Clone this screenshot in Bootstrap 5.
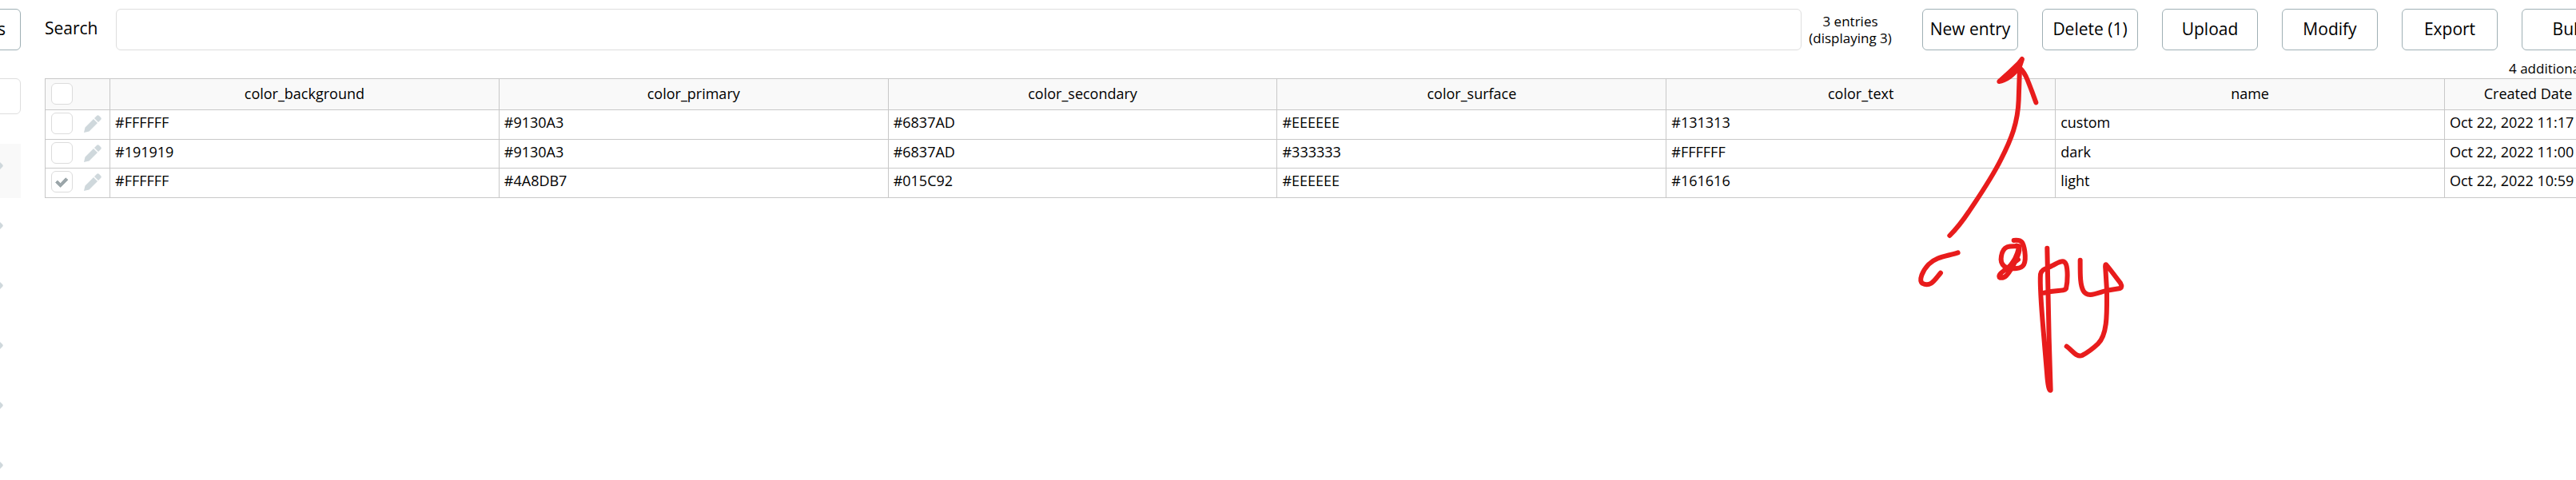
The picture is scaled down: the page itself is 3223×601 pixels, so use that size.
<!DOCTYPE html>
<html lang="en">
<head>
<meta charset="utf-8">
<meta name="viewport" content="width=device-width, initial-scale=1">
<title>App data</title>
<link href="https://cdn.jsdelivr.net/npm/bootstrap@5.3.0/dist/css/bootstrap.min.css" rel="stylesheet">
<style>
  body { font-family: "Open Sans", "Noto Sans", sans-serif; font-size: 18px; line-height: 24px; color: #000; background: #fff; }
  .app-shell { min-height: 100vh; padding-top: 11px; }
  .side-panel { width: 26px; }
  .side-panel > * { width: 240px; }
  .tool-btn { --bs-btn-color: #000; --bs-btn-border-color: #9fb0b5; --bs-btn-bg: #fff; --bs-btn-border-radius: 6px;
    --bs-btn-font-size: 21px; --bs-btn-padding-x: 0; --bs-btn-padding-y: 0; height: 52px; white-space: nowrap; }
  .main-panel { min-width: 0; margin-left: 30px; }
  .main-panel .tool-btn { width: 120px; }
  .side-btn { --bs-btn-padding-x: 18px; }
  .field-box { border: 1px solid #dedede; border-radius: 6px; height: 52px; }
  .side-field { height: 45px; margin-top: 35px; }
  .type-list { margin-top: 37px; gap: 7px; }
  .type-item { height: 68px; padding-right: 22px; }
  .type-item.current { background: #f9f9f9; }
  .search-label { font-size: 21px; width: 89px; padding-bottom: 4px; }
  .tool-row { margin-right: -7px; }
  .entry-count { width: 151px; padding-right: 29px; font-size: 17px; line-height: 21px; }
  .button-row { gap: 30px; }
  .extra-note { height: 35px; width: 84px; margin-right: 45px; padding-top: 12px; font-size: 17px; line-height: 22px; white-space: nowrap; }
  .data-wrap { margin-right: -45px; }
  .data-grid { table-layout: fixed; border-collapse: collapse; width: 100%; }
  .data-grid th, .data-grid td { border: 1px solid #c8c8c8; padding: 0 6px; font-weight: 400; white-space: nowrap; }
  .data-grid th { background: #f9f9f9; text-align: center; height: 39px; padding-bottom: 2px; }
  .data-grid td { vertical-align: top; height: 37px; padding-top: 3px; }
  .data-grid tr:nth-child(even) td { height: 36px; }
  .data-grid .pick-col { width: 81px; padding-left: 7px; padding-right: 6px; }
  .data-grid .date-col { width: 209px; }
  .pick-box.form-check-input { width: 27px; height: 27px; margin: 0; border: 1px solid #dcdcdc; border-radius: 6px; background-color: #fff; }
  .pick-box.form-check-input:checked { background-color: #fff; border-color: #dcdcdc;
    background-size: 100% 100%;
    background-image: url("data:image/svg+xml,%3csvg xmlns='http://www.w3.org/2000/svg' viewBox='0 0 27 27'%3e%3cpath d='M5 14.500 7.500 12l4 4 7-7.500 3 2.500L11.500 21z' fill='%239ba5a9' stroke='%239ba5a9' stroke-linejoin='round'/%3e%3c/svg%3e"); }
  .edit-link { color: #cfd8dc; line-height: 0; }
  .ink-note { right: 523px; top: 60px; width: 340px; height: 450px; pointer-events: none; }
</style>
</head>
<body>
<svg class="d-none">
  <symbol id="pencil" viewBox="0 0 22 22">
    <path fill="currentColor" d="M0 22 1.500 15.500 12 5 17 10 6.500 20.500ZM13 4 16 1Q17.500-.5 19 1L21 3Q22.500 4.500 21 6L18 9Z"/>
  </symbol>
</svg>
<div class="app-shell d-flex position-relative overflow-hidden">
  <aside class="side-panel d-flex flex-column align-items-end flex-shrink-0">
    <button type="button" class="btn tool-btn side-btn text-end flex-shrink-0">s</button>
    <input type="text" class="field-box side-field flex-shrink-0" aria-label="Search types">
    <nav class="type-list d-flex flex-column" aria-label="Types">
      <div class="type-item current d-flex align-items-center justify-content-end"><a href="#" class="edit-link" aria-label="Edit"><svg width="22" height="22"><use href="#pencil"/></svg></a></div>
      <div class="type-item d-flex align-items-center justify-content-end"><a href="#" class="edit-link" aria-label="Edit"><svg width="22" height="22"><use href="#pencil"/></svg></a></div>
      <div class="type-item d-flex align-items-center justify-content-end"><a href="#" class="edit-link" aria-label="Edit"><svg width="22" height="22"><use href="#pencil"/></svg></a></div>
      <div class="type-item d-flex align-items-center justify-content-end"><a href="#" class="edit-link" aria-label="Edit"><svg width="22" height="22"><use href="#pencil"/></svg></a></div>
      <div class="type-item d-flex align-items-center justify-content-end"><a href="#" class="edit-link" aria-label="Edit"><svg width="22" height="22"><use href="#pencil"/></svg></a></div>
      <div class="type-item d-flex align-items-center justify-content-end"><a href="#" class="edit-link" aria-label="Edit"><svg width="22" height="22"><use href="#pencil"/></svg></a></div>
    </nav>
  </aside>
  <main class="main-panel flex-grow-1">
    <div class="data-wrap">
      <div class="tool-row d-flex align-items-center">
        <label for="search" class="search-label flex-shrink-0">Search</label>
        <input id="search" type="text" class="field-box flex-grow-1">
        <div class="entry-count text-center flex-shrink-0">3 entries<br>(displaying 3)</div>
        <div class="button-row d-flex flex-shrink-0">
          <button type="button" class="btn tool-btn">New entry</button>
          <button type="button" class="btn tool-btn">Delete (1)</button>
          <button type="button" class="btn tool-btn">Upload</button>
          <button type="button" class="btn tool-btn">Modify</button>
          <button type="button" class="btn tool-btn">Export</button>
          <button type="button" class="btn tool-btn">Bulk</button>
        </div>
      </div>
      <div class="extra-note ms-auto">4 additional</div>
      <table class="data-grid">
        <thead>
          <tr>
            <th class="pick-col text-start"><input type="checkbox" class="form-check-input pick-box d-block" aria-label="Select all"></th>
            <th>color_background</th><th>color_primary</th><th>color_secondary</th><th>color_surface</th><th>color_text</th><th>name</th><th class="date-col">Created Date</th>
          </tr>
        </thead>
        <tbody>
          <tr>
            <td class="pick-col"><div class="d-flex align-items-center"><input type="checkbox" class="form-check-input pick-box" aria-label="Select custom"><a href="#" class="edit-link ms-auto me-1" aria-label="Edit custom"><svg width="22" height="22"><use href="#pencil"/></svg></a></div></td>
            <td>#FFFFFF</td><td>#9130A3</td><td>#6837AD</td><td>#EEEEEE</td><td>#131313</td><td>custom</td><td>Oct 22, 2022 11:17</td>
          </tr>
          <tr>
            <td class="pick-col"><div class="d-flex align-items-center"><input type="checkbox" class="form-check-input pick-box" aria-label="Select dark"><a href="#" class="edit-link ms-auto me-1" aria-label="Edit dark"><svg width="22" height="22"><use href="#pencil"/></svg></a></div></td>
            <td>#191919</td><td>#9130A3</td><td>#6837AD</td><td>#333333</td><td>#FFFFFF</td><td>dark</td><td>Oct 22, 2022 11:00</td>
          </tr>
          <tr>
            <td class="pick-col"><div class="d-flex align-items-center"><input type="checkbox" checked class="form-check-input pick-box" aria-label="Select light"><a href="#" class="edit-link ms-auto me-1" aria-label="Edit light"><svg width="22" height="22"><use href="#pencil"/></svg></a></div></td>
            <td>#FFFFFF</td><td>#4A8DB7</td><td>#015C92</td><td>#EEEEEE</td><td>#161616</td><td>light</td><td>Oct 22, 2022 10:59</td>
          </tr>
        </tbody>
      </table>
    </div>
  </main>
  <!-- freehand pen strokes over the grid -->
  <svg class="ink-note position-absolute" viewBox="0 0 1020 1350" fill="none" stroke="#e81c1c" stroke-width="18" stroke-linecap="round" stroke-linejoin="round" aria-hidden="true">
    <path d="M238 705C270 673 290 645 310 615C350 556 395 490 430 420C470 342 494 280 497 195L501 75"/>
    <path d="M510 42 500 72Q460 122 424 126Q465 90 497 58Z" fill="#e81c1c"/>
    <path d="M501 75Q518 90 530 120Q548 165 562 205"/>
    <path d="M269 769C225 783 188 784 159 813C135 838 122 873 135 884C167 902 184 868 204 845"/>
    <path d="M479 723C510 720 515 730 520 765C526 812 515 826 490 828C450 833 425 818 432 782C438 742 463 743 497 745"/>
    <path d="M490 743C512 748 490 790 475 820C455 855 445 866 427 863C418 858 430 845 440 838L495 795"/>
    <path d="M498 750C490 785 480 800 460 825L480 828"/>
    <path d="M604 752 611 1090 617 1286Q608 1290 603 1220L590 1065C581 960 576 890 579 850C584 828 605 830 625 817C652 801 668 795 675 813C681 830 682 875 675 904C665 917 640 907 593 920"/>
    <path d="M728 797C728 850 727 890 740 913C755 940 790 921 828 911L878 903Q887 898 879 883C862 862 844 836 826 815Q821 810 823 830L828 911C828 990 832 1075 795 1111C772 1133 752 1146 735 1155C715 1163 700 1138 677 1121"/>
  </svg>
</div>
<script src="https://cdn.jsdelivr.net/npm/bootstrap@5.3.0/dist/js/bootstrap.bundle.min.js"></script>
</body>
</html>
